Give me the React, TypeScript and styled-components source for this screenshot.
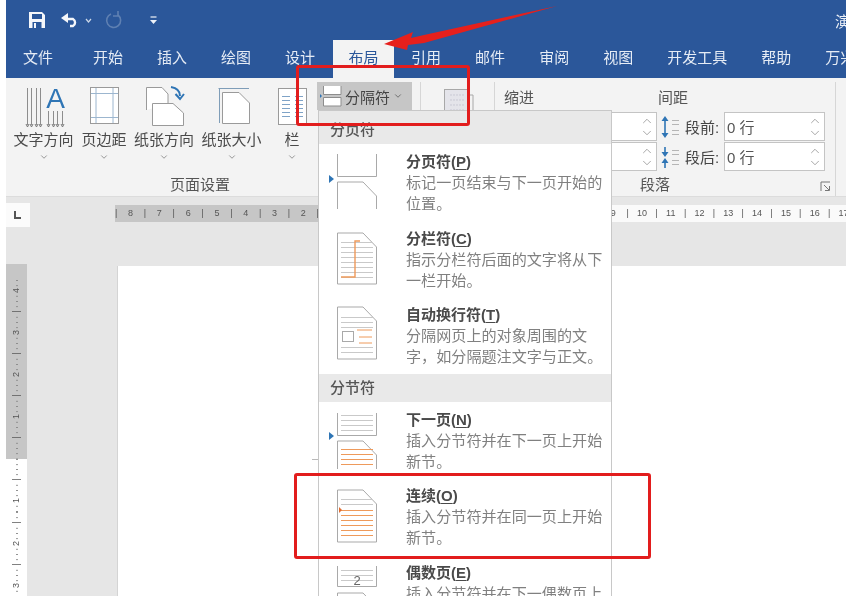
import React from 'react'
import styled, { createGlobalStyle } from 'styled-components'
import { ChevronDown, ChevronUp } from 'lucide-react'

const GlobalStyle = createGlobalStyle`
  html, body {
    margin: 0;
    padding: 0;
    background: #fff;
    overflow: hidden;
  }
  body {
    font-family: "Liberation Sans", "Noto Sans CJK SC", sans-serif;
  }
`

const Screen = styled.div`
  position: relative;
  width: 846px;
  height: 596px;
  overflow: hidden;
  background: #fff;
  filter: blur(0.45px);
`

const Word = styled.div`
  display: flex;
  flex-direction: column;
  height: 100%;
  margin-left: 6px;
`

const TitleBar = styled.div`
  flex: none;
  display: flex;
  align-items: center;
  height: 40px;
  padding-left: 21px;
  background: #2b579a;
  color: #eef2f8;
  font-size: 15px;
  white-space: nowrap;
`

const QuickIcon = styled.svg<{ $gap?: number }>`
  flex: none;
  display: block;
  margin-right: ${(p) => p.$gap ?? 0}px;
`

const DocName = styled.span`
  margin-left: auto;
  margin-right: -4px;
`

const TabBar = styled.div`
  flex: none;
  display: flex;
  height: 38px;
  background: #2b579a;
`

const Tab = styled.div<{ $active?: boolean; $first?: boolean }>`
  flex: none;
  box-sizing: border-box;
  height: 38px;
  padding: ${(p) => (p.$active ? '7px 15.5px 0' : '7px 0 0')};
  margin: ${(p) => (p.$active ? '0 0 0 1px' : p.$first ? '0 23px 0 17px' : '0 17px')};
  font-size: 15px;
  line-height: 22px;
  color: ${(p) => (p.$active ? '#2b579a' : '#e6ecf5')};
  background: ${(p) => (p.$active ? '#f3f3f3' : 'transparent')};
  white-space: nowrap;
`

const Ribbon = styled.div`
  display: flex;
  height: 119px;
  flex: none;
  box-sizing: border-box;
  background: #f3f3f3;
  border-bottom: 1px solid #dcdcdc;
  color: #444;
`

const Group = styled.div<{ $width: number }>`
  position: relative;
  flex: none;
  display: flex;
  flex-direction: column;
  box-sizing: border-box;
  width: ${(p) => p.$width}px;
  margin: 4px 0 0;
  border-right: 1px solid #d6d6d6;
`

const GroupBody = styled.div`
  flex: 1;
  display: flex;
  align-items: flex-start;
`

const GroupLabel = styled.div<{ $shift: number }>`
  height: 22px;
  line-height: 22px;
  padding-right: ${(p) => p.$shift}px;
  text-align: center;
  font-size: 15px;
  color: #555;
`

const Launcher = styled.svg`
  position: absolute;
  right: 4px;
  bottom: 4px;
`

const CommandRow = styled.div`
  display: flex;
  gap: 7px;
  padding-left: 7px;
`

const Command = styled.div<{ $width: number }>`
  display: flex;
  flex-direction: column;
  align-items: center;
  width: ${(p) => p.$width}px;
  padding-top: 2px;
  color: #4a4a4a;
  font-size: 15px;
  line-height: 20px;
  white-space: nowrap;

  svg:last-child {
    margin-top: 2px;
    color: #777;
  }
`

const CommandIcon = styled.svg`
  display: block;
  width: 48px;
  height: 44px;
  flex: none;
  margin-bottom: 2px;
`

const BreaksButton = styled.div`
  display: flex;
  align-items: center;
  gap: 3px;
  width: 95px;
  height: 28px;
  margin-left: 2px;
  padding-left: 3px;
  box-sizing: border-box;
  background: #c6c6c6;
  font-size: 15px;
  color: #444;
`

const ArrangeIcon = styled.svg`
  margin: 5px 0 0 23px;
`

const ParagraphBody = styled.div`
  flex: 1;
  display: flex;
  padding-left: 9px;
`

const IndentColumn = styled.div`
  flex: none;
  width: 153px;
  padding-top: 6px;
`

const SpacingColumn = styled.div`
  flex: none;
  width: 168px;
  margin-left: 1px;
  padding-top: 6px;
`

const Heading = styled.div`
  height: 20px;
  line-height: 20px;
  margin-bottom: 4px;
  font-size: 15px;
  color: #555;
`

const SpinRow = styled.div`
  display: flex;
  align-items: center;
  height: 29px;
  margin-bottom: 1px;
  font-size: 15px;
  color: #444;
`

const SpinIcon = styled.svg`
  flex: none;
  margin: 0 5px 0 2px;
`

const SpinLabel = styled.span`
  flex: none;
  width: 39px;
`

const Spinner = styled.div<{ $width?: number }>`
  flex: ${(p) => (p.$width ? 'none' : '1')};
  width: ${(p) => (p.$width ? `${p.$width}px` : 'auto')};
  height: 29px;
  box-sizing: border-box;
  display: flex;
  align-items: center;
  justify-content: space-between;
  padding: 0 2px 0 2px;
  background: #fff;
  border: 1px solid #c4c4c4;
  font-size: 15px;
  color: #555;
`

const SpinArrows = styled.div`
  margin-left: auto;
  display: flex;
  flex-direction: column;
  color: #777;
  svg {
    display: block;
    margin: -1px 0;
  }
`

const RulerBand = styled.div`
  flex: none;
  display: flex;
  align-items: flex-start;
  height: 69px;
  background: #e6e6e6;
`

const TabStop = styled.div`
  flex: none;
  width: 24px;
  height: 24px;
  margin-top: 6px;
  background: #fbfbfb;
  display: flex;
  align-items: center;
  justify-content: center;
`

const Ruler = styled.div`
  flex: 1;
  display: flex;
  height: 17px;
  margin: 8px 0 0 85px;
`

const RulerPart = styled.div<{ $shaded?: boolean; $offset: number }>`
  flex: ${(p) => (p.$shaded ? '0 0 203px' : '1')};
  display: flex;
  overflow: hidden;
  padding-left: ${(p) => p.$offset}px;
  background: ${(p) => (p.$shaded ? '#c6c6c6' : '#fafafa')};
`

const RulerMark = styled.span<{ $first?: boolean }>`
  flex: none;
  width: 14.4px;
  margin-left: ${(p) => (p.$first ? '-6px' : '0')};
  text-align: center;
  font-size: 9px;
  line-height: 17px;
  color: #555;
  white-space: nowrap;
`

const Workspace = styled.div`
  flex: 1;
  min-height: 0;
  display: flex;
  background: #e6e6e6;
`

const VerticalRuler = styled.div`
  flex: none;
  width: 21px;
  margin-top: -2px;
  margin-right: 90px;
  display: flex;
  flex-direction: column;
`

const RulerHead = styled.div`
  flex: none;
  height: 15.5px;
  background: #c6c6c6;
`

const VerticalCell = styled.div<{ $shaded?: boolean; $half?: boolean }>`
  flex: none;
  height: ${(p) => (p.$half ? 10.55 : 21.1)}px;
  display: flex;
  align-items: center;
  justify-content: center;
  background:
    linear-gradient(#8a8a8a 1px, transparent 1px) center top / 2px 5.27px repeat-y,
    ${(p) => (p.$shaded ? '#c6c6c6' : '#fff')};
  font-size: 9px;
  line-height: 9px;
  color: #555;

  span {
    transform: rotate(-90deg);
    padding: 0 1px;
    background: ${(p) => (p.$shaded ? '#c6c6c6' : '#fff')};
  }
`

const Page = styled.div`
  position: relative;
  flex: 1;
  background: #fff;
  border-left: 1px solid #d4d4d4;
`

const CropMark = styled.div`
  position: absolute;
  left: 194px;
  top: 193px;
  width: 6px;
  height: 1px;
  background: #b9b9b9;
`

const BreakMenu = styled.div`
  position: absolute;
  left: 318px;
  top: 110px;
  width: 294px;
  height: 486px;
  box-sizing: border-box;
  overflow: hidden;
  background: #fff;
  border: 1px solid #c8c8c8;
  border-bottom: none;
`

const MenuHeading = styled.div<{ $height: number }>`
  height: ${(p) => p.$height}px;
  padding: 0 0 3px 11px;
  box-sizing: border-box;
  display: flex;
  align-items: flex-end;
  background: #e9e9e9;
  font-size: 15px;
  font-weight: 500;
  line-height: 22px;
  color: #555;
`

const MenuItem = styled.div`
  display: flex;
  height: 76.6px;
  box-sizing: border-box;
  padding: 7px 6px 0 10px;
`

const ItemIcon = styled.svg`
  flex: none;
  width: 48px;
  height: 60px;
  margin-right: 29px;
`

const ItemText = styled.div`
  min-width: 0;
`

const ItemTitle = styled.div`
  font-size: 15px;
  line-height: 21px;
  font-weight: 700;
  color: #4a4a4a;

  u {
    text-underline-offset: 2px;
  }
`

const ItemDesc = styled.div`
  font-size: 15.1px;
  line-height: 21px;
  color: #808080;
`

const Annotation = styled.div<{ $left: number; $top: number; $width: number; $height: number }>`
  position: absolute;
  left: ${(p) => p.$left}px;
  top: ${(p) => p.$top}px;
  width: ${(p) => p.$width}px;
  height: ${(p) => p.$height}px;
  box-sizing: border-box;
  border: 3px solid #e21d1d;
  border-radius: 3px;
`

const Arrow = styled.svg`
  position: absolute;
  left: 0;
  top: 0;
  pointer-events: none;
`

const tabs = ['文件', '开始', '插入', '绘图', '设计', '布局', '引用', '邮件', '审阅', '视图', '开发工具', '帮助', '万兴']

const leftMarks = ['|', '8', '|', '7', '|', '6', '|', '5', '|', '4', '|', '3', '|', '2', '|']
const rightMarks = ['9', '|', '10', '|', '11', '|', '12', '|', '13', '|', '14', '|', '15', '|', '16', '|', '17']
// the two empty cells are half height, the shading stops between them
const verticalMarks = ['4', '|', '3', '|', '2', '|', '1', '|', '', '', '|', '1', '|', '2', '|', '3', '|']

const LINE = '#a9a9a9'
const ORANGE = '#ee9a5b'
const BLUE = '#2f75b5'

const Marker = ({ y }: { y: number }) => <polygon points={`0,${y - 4} 5,${y} 0,${y + 4}`} fill={BLUE} />

const PageOutline = ({ top, bottom }: { top: number; bottom: number }) => (
  <path d={`M8.5 ${bottom} V${top} H34 L47.5 ${top + 14} V${bottom} Z`} fill="#fff" stroke={LINE} />
)

const OpenPage = ({ top, bottom }: { top: number; bottom: number }) => (
  <path d={`M8.5 ${bottom} V${top} H34 L47.5 ${top + 14} V${bottom}`} fill="none" stroke={LINE} />
)

const Rules = ({ from, to, color, left = 12, right = 44 }: { from: number; to: number; color: string; left?: number; right?: number }) => {
  const rows: number[] = []
  for (let y = from; y <= to; y += 5) rows.push(y)
  return (
    <>
      {rows.map((y) => (
        <line key={y} x1={left} x2={right} y1={y + 0.5} y2={y + 0.5} stroke={color} />
      ))}
    </>
  )
}

const PageBreakIcon = () => (
  <ItemIcon viewBox="0 0 48 60">
    <path d="M8.5 3 V25.5 H47.5 V3" fill="none" stroke={LINE} />
    <Marker y={28} />
    <OpenPage top={31} bottom={58} />
  </ItemIcon>
)

const ColumnBreakIcon = () => (
  <ItemIcon viewBox="0 0 48 60">
    <PageOutline top={5} bottom={56} />
    <Rules from={14} to={51} color="#c9c9c9" />
    <path d="M12 49 H26 V13 H31" fill="none" stroke={ORANGE} strokeWidth="1.4" />
  </ItemIcon>
)

const TextWrapIcon = () => (
  <ItemIcon viewBox="0 0 48 60">
    <PageOutline top={3} bottom={55} />
    <Rules from={13} to={23} color="#c9c9c9" />
    <Rules from={43} to={50} color="#c9c9c9" />
    <rect x="13.5" y="27.5" width="11" height="10" fill="#fff" stroke={LINE} />
    <path d="M28 26 H43 M43 33 H30 M30 39 H43" fill="none" stroke={ORANGE} />
  </ItemIcon>
)

const NextPageIcon = () => (
  <ItemIcon viewBox="0 0 48 60">
    <path d="M8.5 4 V26.5 H47.5 V4" fill="none" stroke={LINE} />
    <Rules from={6} to={21} color="#c9c9c9" />
    <Marker y={27} />
    <OpenPage top={32} bottom={60} />
    <Rules from={40} to={55} color={ORANGE} />
  </ItemIcon>
)

const ContinuousIcon = () => (
  <ItemIcon viewBox="0 0 48 60">
    <PageOutline top={5} bottom={57} />
    <Rules from={14} to={19} color="#c9c9c9" />
    <Rules from={25} to={50} color={ORANGE} />
    <polygon points="10,22 13,25 10,28" fill="#e36c2f" />
  </ItemIcon>
)

const EvenPageIcon = () => (
  <ItemIcon viewBox="0 0 48 60">
    <path d="M8.5 4 V24.5 H47.5 V4" fill="none" stroke={LINE} />
    <Rules from={8} to={18} color="#c9c9c9" />
    <text x="28" y="23" fontSize="13" textAnchor="middle" fill="#666">2</text>
    <OpenPage top={31} bottom={60} />
  </ItemIcon>
)

type BreakEntry = {
  title: string
  hot: string
  desc: string[]
  icon: React.ReactNode
}

const pageBreaks: BreakEntry[] = [
  { title: '分页符', hot: 'P', desc: ['标记一页结束与下一页开始的', '位置。'], icon: <PageBreakIcon /> },
  { title: '分栏符', hot: 'C', desc: ['指示分栏符后面的文字将从下', '一栏开始。'], icon: <ColumnBreakIcon /> },
  { title: '自动换行符', hot: 'T', desc: ['分隔网页上的对象周围的文', '字，如分隔题注文字与正文。'], icon: <TextWrapIcon /> },
]

const sectionBreaks: BreakEntry[] = [
  { title: '下一页', hot: 'N', desc: ['插入分节符并在下一页上开始', '新节。'], icon: <NextPageIcon /> },
  { title: '连续', hot: 'O', desc: ['插入分节符并在同一页上开始', '新节。'], icon: <ContinuousIcon /> },
  { title: '偶数页', hot: 'E', desc: ['插入分节符并在下一偶数页上'], icon: <EvenPageIcon /> },
]

const BreakRow = ({ entry }: { entry: BreakEntry }) => (
  <MenuItem>
    {entry.icon}
    <ItemText>
      <ItemTitle>
        {entry.title}(<u>{entry.hot}</u>)
      </ItemTitle>
      {entry.desc.map((line) => (
        <ItemDesc key={line}>{line}</ItemDesc>
      ))}
    </ItemText>
  </MenuItem>
)

const Caret = () => <ChevronDown size={10} strokeWidth={1.8} />

const Spin = () => (
  <SpinArrows>
    <ChevronUp size={14} strokeWidth={1.1} />
    <ChevronDown size={14} strokeWidth={1.1} />
  </SpinArrows>
)

const BeforeIcon = () => (
  <SpinIcon width="20" height="26" viewBox="0 0 20 26">
    <path d="M5 2 L1.5 7 H8.5 Z M5 24 L1.5 19 H8.5 Z" fill={BLUE} />
    <path d="M5 6 V20" stroke={BLUE} strokeWidth="1.6" />
    <path d="M12 6.5 H19 M12 10.5 H19 M12 16.5 H19 M12 20.5 H19" stroke="#b5b5b5" />
  </SpinIcon>
)

const AfterIcon = () => (
  <SpinIcon width="20" height="26" viewBox="0 0 20 26">
    <path d="M5 13 L1.5 8 H8.5 Z M5 14 L1.5 19 H8.5 Z" fill={BLUE} />
    <path d="M5 3 V9 M5 18 V24" stroke={BLUE} strokeWidth="1.6" />
    <path d="M12 6.5 H19 M12 10.5 H19 M12 16.5 H19 M12 20.5 H19" stroke="#b5b5b5" />
  </SpinIcon>
)

const App = () => {
  return (
    <Screen>
      <GlobalStyle />
      <Word>
        <TitleBar>
          <QuickIcon $gap={13} width="20" height="20" viewBox="0 0 20 20">
            <path d="M2 2 H15 L18 5 V18 H2 Z" fill="#f4f6fa" />
            <rect x="5" y="4" width="10" height="5" fill="#2b579a" />
            <rect x="5.5" y="12" width="9" height="6" fill="#2b579a" />
            <rect x="7" y="13" width="2" height="5" fill="#f4f6fa" />
          </QuickIcon>
          <QuickIcon $gap={4} width="20" height="20" viewBox="0 0 20 20">
            <path d="M6 9 H13 A4 4 0 0 1 13 16 H10" fill="none" stroke="#f4f6fa" strokeWidth="2.4" />
            <path d="M8 3 V13 L1 8 Z" fill="#f4f6fa" />
          </QuickIcon>
          <QuickIcon $gap={12} width="9" height="9" viewBox="0 0 9 9">
            <path d="M2 3 L4.5 6 L7 3" fill="none" stroke="#cdd8e8" strokeWidth="1.2" />
          </QuickIcon>
          <QuickIcon $gap={26} width="18" height="20" viewBox="0 0 18 20">
            <path d="M6 4 A7 7 0 1 0 13 5 M13 1 V6 H8" fill="none" stroke="#5f80b2" strokeWidth="1.6" />
          </QuickIcon>
          <QuickIcon width="9" height="10" viewBox="0 0 9 10">
            <path d="M1.5 2 H7.5" stroke="#eef2f8" strokeWidth="1.2" />
            <path d="M1 5 H8 L4.5 9 Z" fill="#eef2f8" />
          </QuickIcon>
          <DocName>演</DocName>
        </TitleBar>
        <TabBar>
          {tabs.map((tab, i) => (
            <Tab key={tab} $first={i === 0} $active={tab === '布局'}>
              {tab}
            </Tab>
          ))}
        </TabBar>
        <Ribbon>
          <Group $width={415}>
            <GroupBody>
              <CommandRow>
                <Command $width={61}>
                  <CommandIcon viewBox="0 0 48 44">
                    <path d="M7.5 4 V41 M11.5 4 V41 M16.5 4 V41 M20.5 4 V41 M28.5 27 V41 M33.5 27 V41 M37.5 27 V41 M42.5 27 V41" stroke="#8d8d8d" />
                    <path d="M6 40 L7.5 43 L9 40 M10 40 L11.5 43 L13 40 M15 40 L16.5 43 L18 40 M19 40 L20.5 43 L22 40 M27 40 L28.5 43 L30 40 M32 40 L33.5 43 L35 40 M36 40 L37.5 43 L39 40 M41 40 L42.5 43 L44 40" fill="none" stroke="#777" />
                    <text x="35.5" y="24" fontSize="28" textAnchor="middle" fill={BLUE}>A</text>
                  </CommandIcon>
                  文字方向
                  <Caret />
                </Command>
                <Command $width={46}>
                  <CommandIcon viewBox="0 0 48 44">
                    <rect x="10.5" y="3.5" width="28" height="36" fill="#fff" stroke="#9a9a9a" />
                    <path d="M16 4 V39 M33 4 V39 M11 9.5 H38 M11 33.5 H38" stroke="#9cb6cf" />
                  </CommandIcon>
                  页边距
                  <Caret />
                </Command>
                <Command $width={60}>
                  <CommandIcon viewBox="0 0 48 44">
                    <path d="M6.5 26 V3.5 H22 L28 10 V20" fill="#fff" stroke="#9a9a9a" />
                    <path d="M12.5 41.5 V19.5 H33 L43.5 29 V41.5 Z" fill="#fff" stroke="#9a9a9a" />
                    <path d="M31 3 C37 4 40 7 40 12 M35.5 10 L40 15 L44 10" fill="none" stroke={BLUE} strokeWidth="2" />
                  </CommandIcon>
                  纸张方向
                  <Caret />
                </Command>
                <Command $width={61}>
                  <CommandIcon viewBox="0 0 48 44">
                    <path d="M10.5 4.5 H41 M11.5 5 V39" stroke="#7f9db8" />
                    <path d="M14.5 39.5 V8.5 H31 L41.5 19 V39.5 Z" fill="#fff" stroke="#9a9a9a" />
                  </CommandIcon>
                  纸张大小
                  <Caret />
                </Command>
                <Command $width={46}>
                  <CommandIcon viewBox="0 0 48 44">
                    <rect x="10.5" y="4.5" width="28" height="36" fill="#fff" stroke="#9a9a9a" />
                    <path d="M14 12.5 H22 M14 16.5 H22 M14 20.5 H22 M14 24.5 H22 M14 28.5 H22 M14 32.5 H22 M27 12.5 H35 M27 16.5 H35 M27 20.5 H35 M27 24.5 H35 M27 28.5 H35 M27 32.5 H35" stroke="#7fa3c7" />
                  </CommandIcon>
                  栏
                  <Caret />
                </Command>
              </CommandRow>
              <BreaksButton>
                <svg width="22" height="22" viewBox="0 0 22 22">
                  <path d="M0 9 L2 11 L0 13 Z" fill={BLUE} />
                  <path d="M3.5 1 V9.5 H21 V1 M3.5 21 V12.5 H21 V21 Z" fill="#fff" stroke="#8d8d8d" />
                </svg>
                分隔符
                <ChevronDown size={10} strokeWidth={1.6} />
              </BreaksButton>
            </GroupBody>
            <GroupLabel $shift={26}>页面设置</GroupLabel>
          </Group>
          <Group $width={74}>
            <GroupBody>
              <ArrangeIcon width="30" height="26" viewBox="0 0 30 26">
                <rect x="0.5" y="2.5" width="24" height="24" fill="#e4e4ea" stroke="#a8a8a8" />
                <path d="M6 8 H20 M6 13 H20 M6 18 H20 M6 23 H20" stroke="#c9c9d4" strokeDasharray="2 1" />
                <path d="M25 8 H29 V26" fill="none" stroke="#a8a8a8" />
              </ArrangeIcon>
            </GroupBody>
          </Group>
          <Group $width={341}>
            <ParagraphBody>
              <IndentColumn>
                <Heading>缩进</Heading>
                <SpinRow>
                  <Spinner>
                    <Spin />
                  </Spinner>
                </SpinRow>
                <SpinRow>
                  <Spinner>
                    <Spin />
                  </Spinner>
                </SpinRow>
              </IndentColumn>
              <SpacingColumn>
                <Heading>间距</Heading>
                <SpinRow>
                  <BeforeIcon />
                  <SpinLabel>段前:</SpinLabel>
                  <Spinner $width={101}>
                    0 行
                    <Spin />
                  </Spinner>
                </SpinRow>
                <SpinRow>
                  <AfterIcon />
                  <SpinLabel>段后:</SpinLabel>
                  <Spinner $width={101}>
                    0 行
                    <Spin />
                  </Spinner>
                </SpinRow>
              </SpacingColumn>
            </ParagraphBody>
            <GroupLabel $shift={20}>段落</GroupLabel>
            <Launcher width="11" height="11" viewBox="0 0 11 11">
              <path d="M1 10 V1 H10 M4 4 L9 9 M5 9.5 H9.5 V5" fill="none" stroke="#777" />
            </Launcher>
          </Group>
        </Ribbon>
        <RulerBand>
          <TabStop>
            <svg width="10" height="10" viewBox="0 0 10 10">
              <path d="M2 1 V8 H8" fill="none" stroke="#555" strokeWidth="2" />
            </svg>
          </TabStop>
          <Ruler>
            <RulerPart $shaded $offset={0}>
              {leftMarks.map((mark, i) => (
                <RulerMark key={i} $first={i === 0}>
                  {mark}
                </RulerMark>
              ))}
            </RulerPart>
            <RulerPart $offset={288}>
              {rightMarks.map((mark, i) => (
                <RulerMark key={i}>{mark}</RulerMark>
              ))}
            </RulerPart>
          </Ruler>
        </RulerBand>
        <Workspace>
          <VerticalRuler>
            <RulerHead />
            {verticalMarks.map((mark, i) => (
              <VerticalCell key={i} $shaded={i <= 8} $half={!mark}>
                {mark && <span>{mark}</span>}
              </VerticalCell>
            ))}
          </VerticalRuler>
          <Page>
            <CropMark />
          </Page>
        </Workspace>
      </Word>
      <BreakMenu>
        <MenuHeading $height={33}>分页符</MenuHeading>
        {pageBreaks.map((entry) => (
          <BreakRow key={entry.title} entry={entry} />
        ))}
        <MenuHeading $height={28}>分节符</MenuHeading>
        {sectionBreaks.map((entry) => (
          <BreakRow key={entry.title} entry={entry} />
        ))}
      </BreakMenu>
      <Annotation $left={296} $top={65} $width={174} $height={61} />
      <Annotation $left={294} $top={473} $width={357} $height={86} />
      <Arrow width="846" height="60" viewBox="0 0 846 60">
        <polygon points="557,6 424,35 411,38 413,32 384,44 407,50 408,45 424,43" fill="#e6201c" />
      </Arrow>
    </Screen>
  )
}

export default App
